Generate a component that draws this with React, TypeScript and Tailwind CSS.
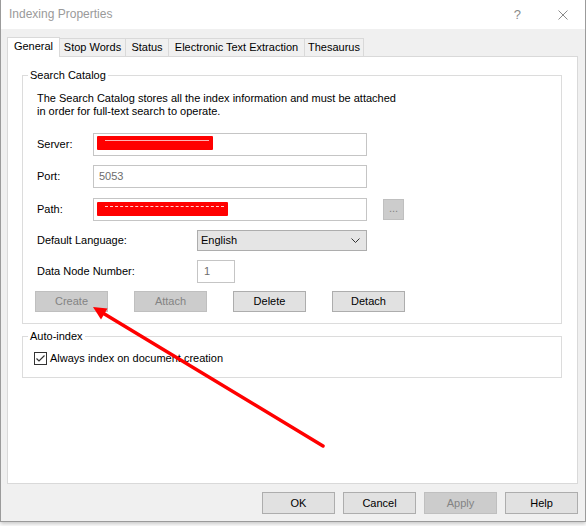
import React from "react";

const TABS = [
  { label: "General", w: "w-[53px]", active: true },
  { label: "Stop Words", w: "w-[66px]", active: false },
  { label: "Status", w: "w-[43px]", active: false },
  { label: "Electronic Text Extraction", w: "w-[136px]", active: false },
  { label: "Thesaurus", w: "w-[59px]", active: false },
];

function Redacted({ width, dashed }: { width: string; dashed?: boolean }) {
  return (
    <div className={`relative h-[14px] ${width} rounded-[1px] bg-[#ff0000]`}>
      <div
        className={`absolute left-[8px] right-[4px] top-[4px] h-px ${
          dashed ? "border-t border-dashed border-white/80" : "bg-white/70"
        }`}
      />
    </div>
  );
}

function WinButton({ label, disabled }: { label: string; disabled?: boolean }) {
  return (
    <div
      className={`flex h-[21px] w-[73px] items-center justify-center border ${
        disabled
          ? "border-[#bfbfbf] bg-[#cccccc] text-[#838383]"
          : "border-[#adadad] bg-[#e1e1e1] text-black"
      }`}
    >
      {label}
    </div>
  );
}

function Checkbox() {
  return (
    <div className="flex h-[13px] w-[13px] items-center justify-center border border-[#333333] bg-white">
      <svg width="11" height="11" viewBox="0 0 11 11">
        <polyline points="1.5,5.5 4,8 9.5,2.5" fill="none" stroke="#333333" strokeWidth="1.2" />
      </svg>
    </div>
  );
}

export default function App() {
  return (
    <div className="relative h-[526px] w-[586px] bg-white font-['Liberation_Sans',Arial,sans-serif] text-[11px] leading-[13px] text-black">
      <div className="flex h-[522px] flex-col border-x border-b border-[#9b9b9b] bg-[#f0f0f0] shadow-[0_2px_4px_rgba(0,0,0,0.22)]">
        {/* Title bar */}
        <div className="flex h-[29px] items-center bg-white pl-[8px] pr-[17px]">
          <span className="text-[12px] text-[#9a9a9a]">Indexing Properties</span>
          <span className="ml-auto mr-[37px] text-[13px] text-[#8a8a8a]">?</span>
          <svg width="10" height="10" viewBox="0 0 10 10">
            <path d="M0.5 0.5 L9.5 9.5 M9.5 0.5 L0.5 9.5" stroke="#8a8a8a" strokeWidth="1" />
          </svg>
        </div>

        <div className="flex flex-col pl-[6px] pt-[8px]">
          {/* Tabs */}
          <div className="flex h-[19px] items-end">
            {TABS.map((t) =>
              t.active ? (
                <div
                  key={t.label}
                  className={`relative z-10 -mb-px flex h-[20px] ${t.w} items-start justify-center border-x border-t border-[#d9d9d9] bg-white pt-[2px]`}
                >
                  {t.label}
                </div>
              ) : (
                <div
                  key={t.label}
                  className={`flex h-[18px] ${t.w} items-center justify-center border-r border-t border-[#d9d9d9] bg-[#f0f0f0]`}
                >
                  {t.label}
                </div>
              )
            )}
          </div>

          {/* Tab panel */}
          <div className="flex h-[428px] w-[571px] flex-col border border-[#d9d9d9] bg-white">
            <fieldset className="ml-[14px] mt-[11px] w-[540px] border border-[#dcdcdc]">
              <legend className="ml-[5px] px-[2px] leading-[14px]">Search Catalog</legend>
              <div className="flex flex-col pb-[11px] pl-[14px] pt-[10px]">
                <p>The Search Catalog stores all the index information and must be attached</p>
                <p>in order for full-text search to operate.</p>

                <div className="mt-[15px] flex h-[23px] items-center">
                  <span className="w-[56px]">Server:</span>
                  <div className="flex h-[23px] w-[274px] items-start border border-[#c5c5c5] bg-white pl-[3px] pt-[2px]">
                    <Redacted width="w-[116px]" />
                  </div>
                </div>

                <div className="mt-[9px] flex h-[23px] items-center">
                  <span className="w-[56px]">Port:</span>
                  <div className="flex h-[23px] w-[274px] items-center border border-[#c5c5c5] bg-white pl-[5px] text-[#6d6d6d]">
                    5053
                  </div>
                </div>

                <div className="mt-[10px] flex h-[23px] items-center">
                  <span className="w-[56px]">Path:</span>
                  <div className="flex h-[23px] w-[274px] items-start border border-[#c5c5c5] bg-white pl-[3px] pt-[3px]">
                    <Redacted width="w-[131px]" dashed />
                  </div>
                  <div className="ml-[16px] flex h-[21px] w-[21px] items-center justify-center border border-[#bfbfbf] bg-[#cccccc] pb-[2px] text-[#838383]">
                    ...
                  </div>
                </div>

                <div className="mt-[9px] flex h-[21px] items-center">
                  <span className="w-[160px]">Default Language:</span>
                  <div className="flex h-[21px] w-[170px] items-center border border-[#adadad] bg-[#e5e5e5] pl-[3px] pr-[6px]">
                    <span>English</span>
                    <svg className="ml-auto" width="9" height="5" viewBox="0 0 9 5">
                      <path d="M0.5 0.5 L4.5 4.5 L8.5 0.5" fill="none" stroke="#333333" strokeWidth="1" />
                    </svg>
                  </div>
                </div>

                <div className="mt-[9px] flex h-[23px] items-center">
                  <span className="w-[160px]">Data Node Number:</span>
                  <div className="flex h-[23px] w-[38px] items-center border border-[#c5c5c5] bg-white pl-[6px] text-[#6d6d6d]">
                    1
                  </div>
                </div>

                <div className="-ml-[2px] mt-[8px] flex gap-[26px]">
                  <WinButton label="Create" disabled />
                  <WinButton label="Attach" disabled />
                  <WinButton label="Delete" />
                  <WinButton label="Detach" />
                </div>
              </div>
            </fieldset>

            <fieldset className="ml-[14px] mt-[5px] w-[540px] border border-[#dcdcdc]">
              <legend className="ml-[5px] px-[2px] leading-[14px]">Auto-index</legend>
              <div className="flex items-center gap-[3px] pb-[12px] pl-[11px] pt-[9px]">
                <Checkbox />
                <span>Always index on document creation</span>
              </div>
            </fieldset>
          </div>

          {/* Dialog buttons */}
          <div className="mt-[8px] flex justify-end gap-[8px] pr-[7px]">
            <div className="flex h-[22px] w-[73px] items-center justify-center border border-[#adadad] bg-[#e1e1e1]">OK</div>
            <div className="flex h-[22px] w-[73px] items-center justify-center border border-[#adadad] bg-[#e1e1e1]">Cancel</div>
            <div className="flex h-[22px] w-[73px] items-center justify-center border border-[#bfbfbf] bg-[#cccccc] text-[#838383]">Apply</div>
            <div className="flex h-[22px] w-[73px] items-center justify-center border border-[#adadad] bg-[#e1e1e1]">Help</div>
          </div>
        </div>
      </div>

      {/* Red annotation arrow */}
      <svg className="pointer-events-none absolute inset-0" width="586" height="526" viewBox="0 0 586 526">
        <line x1="323" y1="446" x2="102" y2="312.5" stroke="#ff0000" strokeWidth="3.5" strokeLinecap="round" />
        <polygon points="93,307 107.5,308.5 101,319.5" fill="#ff0000" />
      </svg>
    </div>
  );
}
